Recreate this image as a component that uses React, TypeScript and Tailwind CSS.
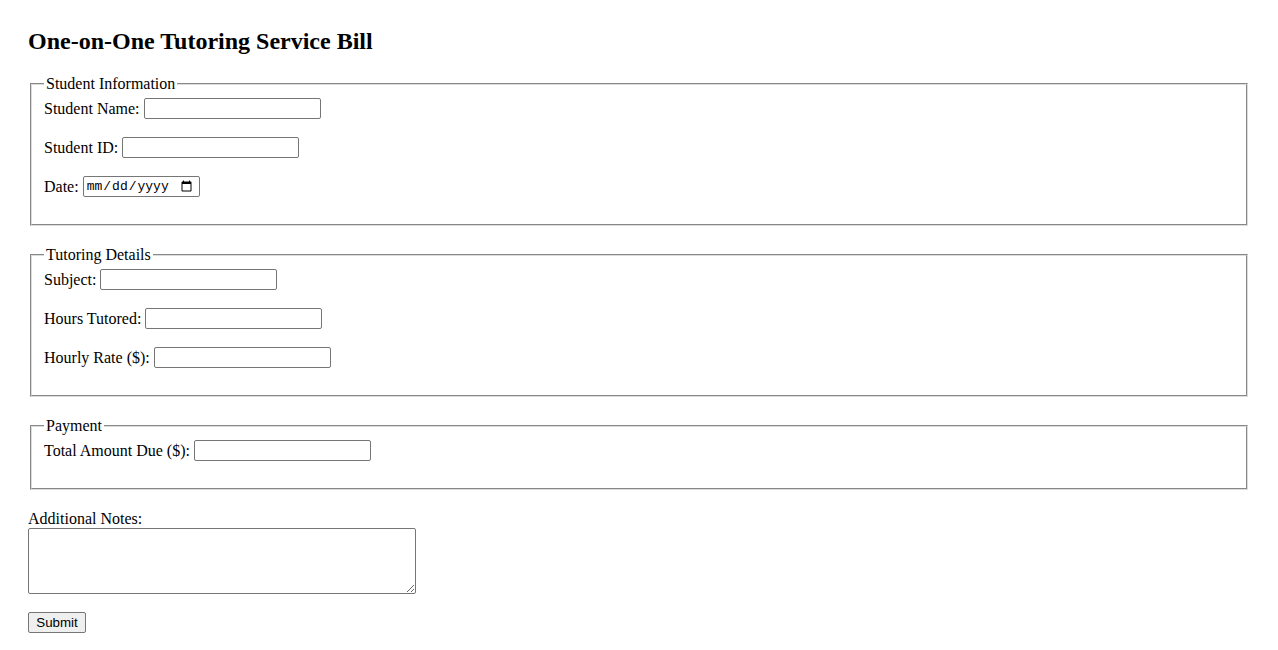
import React from 'react';

const inputCls =
    "h-[21px] w-[177px] border border-[#767676] rounded-[2px] px-[2px] py-[1px] bg-white text-[13.333px] font-['Liberation_Sans',Arial,sans-serif]";

function Row({ label, children }: { label: string; children?: React.ReactNode }) {
    return (
        <div className="flex items-center h-[21px] gap-[4px]">
            <label className="leading-[18px]">{label}</label>
            {children ?? <input type="text" className={inputCls} />}
        </div>
    );
}

function Section({ title, children }: { title: string; children: React.ReactNode }) {
    return (
        <fieldset className="mx-[2px] mb-[20px] border-2 [border-style:groove] border-[#dcdcdc] px-[12px] pt-[5px] pb-[27px]">
            <legend className="px-[2px] leading-[18px]">{title}</legend>
            <div className="flex flex-col gap-[18px]">{children}</div>
        </fieldset>
    );
}

export default function App() {
    return (
        <div className="min-h-[650px] bg-white text-black px-[28px] pt-[28px] font-['Liberation_Serif','Times_New_Roman',serif] text-[16px]">
            <h2 className="text-[24px] font-bold leading-[27px] mb-[20px]">One-on-One Tutoring Service Bill</h2>

            <form>
                {/* Student info */}
                <Section title="Student Information">
                    <Row label="Student Name:" />
                    <Row label="Student ID:" />
                    <Row label="Date:">
                        <input
                            type="date"
                            className="h-[21px] w-[117px] border border-[#767676] rounded-[2px] pl-[2px] pr-[4px] py-[1px] bg-white text-[13px] font-['Liberation_Mono',monospace]"
                        />
                    </Row>
                </Section>

                <Section title="Tutoring Details">
                    <Row label="Subject:" />
                    <Row label="Hours Tutored:" />
                    <Row label="Hourly Rate ($):" />
                </Section>

                <Section title="Payment">
                    <Row label="Total Amount Due ($):" />
                </Section>

                <label className="block leading-[18px]">Additional Notes:</label>
                <textarea className="block w-[388px] h-[66px] border border-[#767676] rounded-[2px] p-[2px] bg-white text-[13.333px] font-['Liberation_Mono',monospace]" />

                <button
                    type="submit"
                    className="mt-[18px] h-[21px] w-[58px] border border-[#767676] rounded-[2px] bg-[#efefef] text-[13.333px] font-['Liberation_Sans',Arial,sans-serif] leading-[15px]"
                >
                    Submit
                </button>
            </form>
        </div>
    );
}
